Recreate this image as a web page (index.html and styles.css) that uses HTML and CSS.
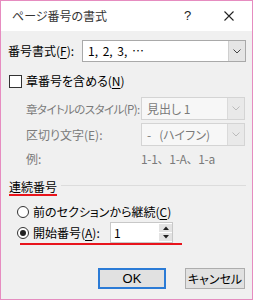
FILE: index.html
```html
<!DOCTYPE HTML>
<html>
<head>
<meta charset="utf-8">
<title>ページ番号の書式</title>
<link rel="stylesheet" href="styles.css">
</head>
<body>
<div class="window">
	<div class="titlebar">
		<span class="title">ページ番号の書式</span>
		<span class="help">?</span>
		<span class="close"><svg width="10" height="10" viewBox="0 0 10 10"><path d="M0.5 0.5L9.5 9.5M9.5 0.5L0.5 9.5" stroke="#222" stroke-width="1.1" fill="none"/></svg></span>
	</div>
	<div class="content">
		<!-- number format -->
		<div class="format-row">
			<span class="label">番号書式(<u>F</u>):</span>
			<div class="select">
				<span class="value">1, 2, 3, …</span>
				<span class="drop"><svg width="8" height="5" viewBox="0 0 8 5"><path d="M0.5 0.5L4 4L7.5 0.5" stroke="#444" fill="none"/></svg></span>
			</div>
		</div>

		<div class="check-row">
			<span class="checkbox"></span>
			<span>章番号を含める(<u>N</u>)</span>
		</div>

		<div class="sub-row first">
			<span class="label">章タイトルのスタイル(P):</span>
			<div class="select disabled">
				<span class="value">見出し 1</span>
				<span class="drop"><svg width="8" height="5" viewBox="0 0 8 5"><path d="M0.5 0.5L4 4L7.5 0.5" stroke="#bbb" fill="none"/></svg></span>
			</div>
		</div>
		<div class="sub-row">
			<span class="label">区切り文字(E):</span>
			<div class="select disabled">
				<span class="value">-&nbsp;&nbsp;&nbsp;(ハイフン)</span>
				<span class="drop"><svg width="8" height="5" viewBox="0 0 8 5"><path d="M0.5 0.5L4 4L7.5 0.5" stroke="#bbb" fill="none"/></svg></span>
			</div>
		</div>
		<div class="example-row">
			<span class="label">例:</span>
			<span class="example">1-1、1-A、1-a</span>
		</div>

		<!-- page numbering -->
		<div class="group-head">
			<span class="group-title">連続番号</span>
			<span class="group-line"></span>
		</div>

		<div class="radio-row first">
			<span class="radio"></span>
			<span>前のセクションから継続(<u>C</u>)</span>
		</div>
		<div class="radio-row start">
			<span class="radio checked"></span>
			<span class="start-label">開始番号(<u>A</u>):</span>
			<div class="spin">
				<span class="spin-value">1</span>
				<span class="spin-btns">
					<span class="spin-btn"><svg width="6" height="4" viewBox="0 0 6 4"><path d="M0 4L3 0.5L6 4Z" fill="#222"/></svg></span>
					<span class="spin-btn"><svg width="6" height="4" viewBox="0 0 6 4"><path d="M0 0L3 3.5L6 0Z" fill="#222"/></svg></span>
				</span>
			</div>
		</div>
		<div class="red-mark"></div>

		<div class="buttons">
			<span class="button default">OK</span>
			<span class="button">キャンセル</span>
		</div>
	</div>
</div>
</body>
</html>
```

FILE: styles.css
```css
body {
	margin: 0;
	padding: 0;
	background: #fff;
}
.window {
	width: 253px;
	height: 300px;
	box-sizing: border-box;
	border: 1px solid #e68cc0;
	background: #f0f0f0;
	font-family: "Noto Sans CJK JP", "Noto Sans", sans-serif;
	font-size: 12px;
	font-feature-settings: "palt";
	color: #000;
	line-height: 14px;
	white-space: nowrap;
}
.titlebar {
	height: 30px;
	background: #fff;
	display: flex;
	align-items: center;
	padding-left: 11px;
}
.title {
	flex: 1;
	color: #333;
}
.help {
	width: 12px;
	margin-right: 28px;
	font-family: "Liberation Sans", sans-serif;
	font-size: 13px;
	color: #222;
}
.close {
	display: flex;
	margin-right: 18px;
}
.content {
	padding: 0 6px 0 7px;
}
u {
	text-decoration: underline;
	text-underline-offset: 2px;
}

/* selects */
.select {
	display: flex;
	align-items: stretch;
	box-sizing: border-box;
	background: #fff;
	border: 1px solid #a9a9a9;
}
.select .value {
	flex: 1;
	display: flex;
	align-items: center;
	padding-left: 5px;
}
.select .drop {
	width: 16px;
	display: flex;
	align-items: center;
	justify-content: center;
	background: #e5e5e5;
	border-left: 1px solid #cfcfcf;
}
.select.disabled {
	border-color: #d4d4d4;
	background: #f7f7f7;
	color: #7a7a7a;
}
.select.disabled .drop {
	background: #e9e9e9;
	border-left-color: #dadada;
}

.format-row {
	margin-top: 9px;
	display: flex;
	align-items: center;
	height: 22px;
}
.format-row .label {
	width: 74px;
}
.format-row .select {
	flex: 1;
	height: 22px;
}
.format-row .value {
	word-spacing: 2px;
}

.check-row {
	margin-top: 12px;
	display: flex;
	align-items: center;
	height: 14px;
	gap: 4px;
}
.checkbox {
	width: 13px;
	height: 13px;
	box-sizing: border-box;
	border: 1px solid #333;
	background: #fff;
	margin-left: 1px;
}

.sub-row {
	margin-top: 3px;
	display: flex;
	align-items: center;
	height: 23px;
	padding-left: 18px;
	color: #7a7a7a;
}
.sub-row.first {
	margin-top: 9px;
}
.sub-row .label {
	flex: 1;
	min-width: 0;
}
.sub-row.first .label {
	font-size: 11.5px;
	letter-spacing: -0.6px;
}
.sub-row .select {
	flex: none;
	width: 104px;
	height: 23px;
	margin-right: 1px;
}
.example-row {
	margin-top: 6px;
	display: flex;
	height: 14px;
	padding-left: 18px;
	color: #7a7a7a;
}
.example-row .label {
	width: 115px;
}
.example {
	font-feature-settings: normal;
	letter-spacing: -0.3px;
}

.group-head {
	margin-top: 13px;
	display: flex;
	align-items: center;
	height: 16px;
	padding-left: 1px;
}
.group-title {
	border-bottom: 2px solid #e8141c;
	line-height: 14px;
	padding-top: 1px;
}
.group-line {
	flex: 1;
	height: 1px;
	background: #dcdcdc;
	margin-left: 4px;
	margin-top: -4px;
}

.radio-row {
	display: flex;
	align-items: center;
	gap: 4px;
	padding-left: 9px;
}
.radio-row.first {
	margin-top: 10px;
	height: 14px;
}
.radio-row.start {
	margin-top: 3px;
	height: 21px;
}
.radio {
	width: 12px;
	height: 12px;
	box-sizing: border-box;
	border: 1px solid #333;
	border-radius: 50%;
	background: #fff;
	display: flex;
	align-items: center;
	justify-content: center;
}
.radio.checked::after {
	content: "";
	width: 6px;
	height: 6px;
	border-radius: 50%;
	background: #222;
}
.start-label {
	width: 73px;
}
.spin {
	width: 63px;
	height: 21px;
	box-sizing: border-box;
	border: 1px solid #c8c8c8;
	background: #fff;
	display: flex;
}
.spin-value {
	flex: 1;
	padding-left: 3px;
	display: flex;
	align-items: center;
}
.spin-btns {
	width: 13px;
	display: flex;
	flex-direction: column;
	gap: 1px;
	padding: 1px 0;
}
.spin-btn {
	flex: 1;
	background: #e3e3e3;
	display: flex;
	align-items: center;
	justify-content: center;
}
.red-mark {
	margin-left: 12px;
	width: 162px;
	height: 2px;
	background: #e8141c;
}

.buttons {
	margin-top: 23px;
	display: flex;
	justify-content: flex-end;
	gap: 19px;
	padding-right: 1px;
}
.button {
	height: 21px;
	box-sizing: border-box;
	display: flex;
	align-items: center;
	justify-content: center;
	background: #e1e1e1;
	border: 1px solid #adadad;
	width: 60px;
	font-family: "Noto Sans CJK JP", sans-serif;
}
.button.default {
	width: 68px;
	border: 2px solid #2b7bd6;
	font-family: "Liberation Sans", sans-serif;
	font-size: 13px;
}
```
